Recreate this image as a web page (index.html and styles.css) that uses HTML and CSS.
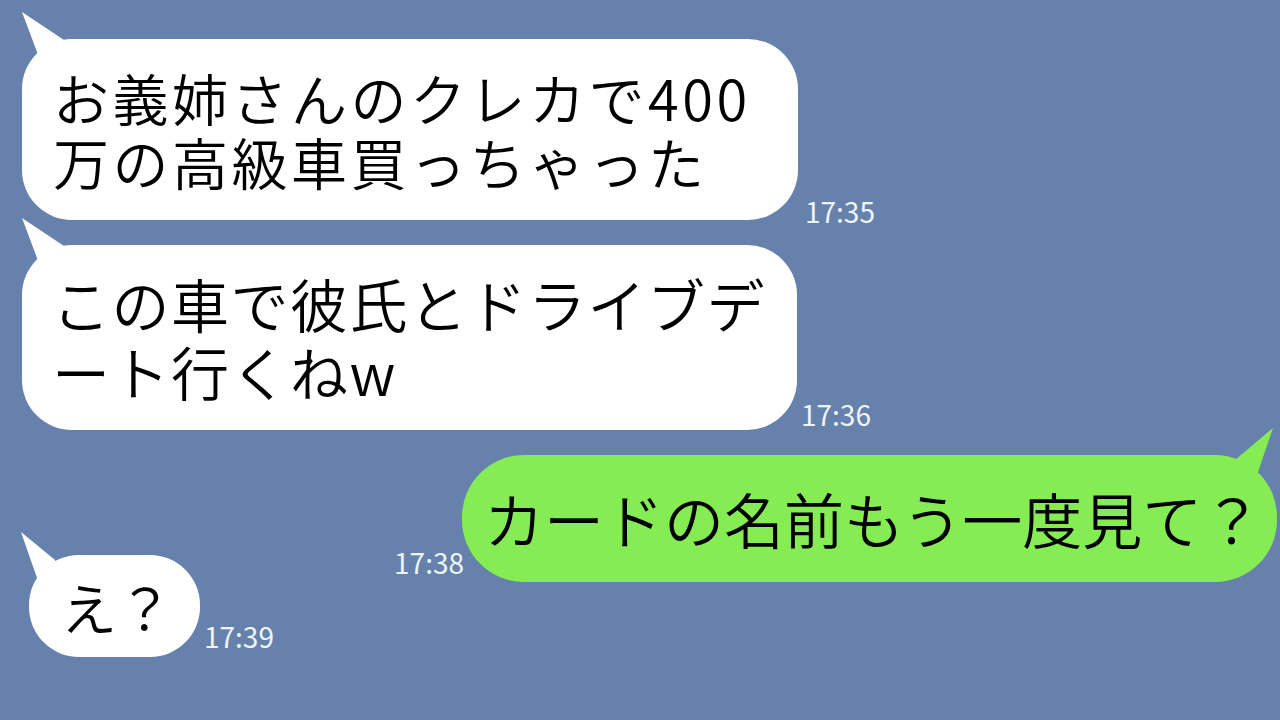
FILE: index.html
```html
<!DOCTYPE html>
<html lang="ja">
<head>
  <meta charset="UTF-8">
  <title>トーク</title>
  <meta name="viewport" content="width=device-width, initial-scale=1.0">
  <link rel="stylesheet" href="styles.css">
</head>
<body>
  <div class="chat">
    <div class="row">
      <div class="bubble b-first">お義姉さんのクレカで400<br>万の高級車買っちゃった</div>
      <span class="time time-low">17:35</span>
    </div>

    <div class="row row-next">
      <div class="bubble b-second">この車で彼氏とドライブデ<br>ート行くねw</div>
      <span class="time time-mid">17:36</span>
    </div>

    <div class="row row-next row-me">
      <span class="time time-me">17:38</span>
      <div class="bubble mine">カードの名前もう一度見て？</div>
    </div>

    <div class="row row-last">
      <div class="bubble b-short">え？</div>
      <span class="time">17:39</span>
    </div>
  </div>
</body>
</html>
```

FILE: styles.css
```css
body {
  margin: 0;
  padding: 0;
  background: #6781ad;
  font-family: "Noto Sans CJK JP", "Noto Sans", sans-serif;
  width: 1280px;
  height: 720px;
  overflow: hidden;
}
.chat {
  padding: 39px 3px 0 22px;
}
.row {
  display: flex;
  align-items: flex-end;
  gap: 4px;
}
.row-next {
  margin-top: 25px;
}
.row-me {
  justify-content: flex-end;
}
.row-last {
  margin-top: -27px;
}

.bubble {
  position: relative;
  box-sizing: border-box;
  background: #fff;
  color: #000;
  font-size: 56px;
  font-weight: 350;
  line-height: 64px;
  white-space: nowrap;
  border-radius: 50px;
}
/* tail, top left */
.bubble::before {
  content: "";
  position: absolute;
  left: 0;
  top: -27px;
  width: 44px;
  height: 48px;
  background: inherit;
  clip-path: polygon(0 0, 42px 28px, 44px 48px, 18px 48px);
}
.b-first {
  width: 776px;
  letter-spacing: 3.5px;
  padding: 26px 0 27px 31px;
}
.b-second {
  width: 775px;
  font-size: 58px;
  letter-spacing: 1.5px;
  line-height: 68px;
  padding: 24px 0 25px 30px;
}
.b-short {
  width: 171px;
  margin-left: 7px;
  padding: 19px 0 19px 32px;
}
.b-short::before {
  left: -8px;
  top: -23px;
  width: 34px;
  height: 46px;
  clip-path: polygon(0 0, 34px 28px, 34px 46px, 16px 46px);
}
.mine {
  width: 815px;
  background: #86ec53;
  font-size: 60px;
  padding: 31px 0 32px 22px;
  border-radius: 62px;
}
.mine::before {
  left: auto;
  right: 4px;
  top: -27px;
  width: 40px;
  height: 48px;
  clip-path: polygon(40px 0, 25px 44px, 25px 48px, 0 48px, 2px 32px);
}

.time {
  color: #eef5f7;
  font-size: 28px;
  line-height: 1;
  margin-bottom: 7px;
}
.time-low {
  margin-left: 3px;
  margin-bottom: -5px;
}
.time-mid {
  margin-bottom: 2px;
}
.time-me {
  margin-right: -6px;
  margin-bottom: 6px;
}
```
